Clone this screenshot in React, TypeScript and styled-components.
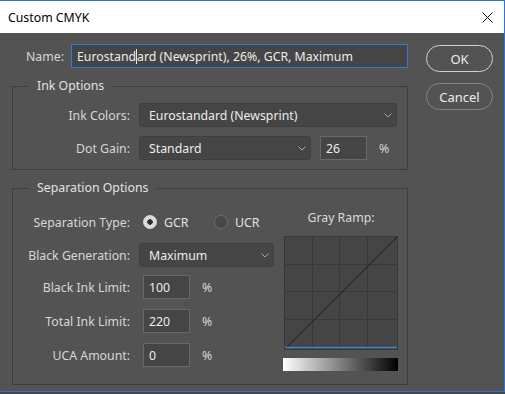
import React from 'react';
import styled, { createGlobalStyle } from 'styled-components';

const GlobalStyle = createGlobalStyle`
	html, body {
		margin: 0;
		padding: 0;
		background: #454545;
	}
	body {
		font-family: "Noto Sans", "Open Sans", sans-serif;
		font-size: 12.3px;
	}
`;

function Chevron() {
	return (
		<svg width="8" height="5" viewBox="0 0 8 5">
			<polyline points="0.5,0.5 4,4 7.5,0.5" fill="none" stroke="#a8a8a8" strokeWidth="1" />
		</svg>
	);
}

function CloseIcon() {
	return (
		<svg width="11" height="11" viewBox="0 0 11 11">
			<line x1="0.5" y1="0.5" x2="10.5" y2="10.5" stroke="#111" strokeWidth="1" />
			<line x1="10.5" y1="0.5" x2="0.5" y2="10.5" stroke="#111" strokeWidth="1" />
		</svg>
	);
}

function GrayRampChart() {
	const ticks = [28, 55, 83];
	return (
		<svg width="114" height="114" viewBox="0 0 114 114">
			<rect x="0.5" y="0.5" width="113" height="113" fill="#454545" stroke="#383838" />
			{ticks.map((t) => (
				<line key={'v' + t} x1={t + 0.5} y1="1" x2={t + 0.5} y2="113" stroke="#393939" />
			))}
			{ticks.map((t) => (
				<line key={'h' + t} x1="1" y1={t + 0.5} x2="113" y2={t + 0.5} stroke="#393939" />
			))}
			<line x1="1" y1="113" x2="113" y2="1" stroke="#1c1c1c" strokeWidth="1" />
			<line x1="1" y1="111.5" x2="113" y2="111.5" stroke="#3e82c9" strokeWidth="1.3" />
		</svg>
	);
}

type RowProps = { label: string; mt: number; children: React.ReactNode };
function FormRow({ label, mt, children }: RowProps) {
	return (
		<Row $mt={mt}>
			<Label $w={117}>{label}</Label>
			{children}
		</Row>
	);
}

export default function App() {
	return (
		<>
			<GlobalStyle />
			<Window>
				<TitleBar>
					<Title>Custom CMYK</Title>
					<CloseIcon />
				</TitleBar>
				<Body>
					<MainColumn>
						<Row $mt={0}>
							<Label $w={52} $gap={7}>Name:</Label>
							<NameField>
								Eurostand
								<Caret />
								ard (Newsprint), 26%, GCR, Maximum
							</NameField>
						</Row>

						<Group $mt={18} $pb={9}>
							<GroupTitle>Ink Options</GroupTitle>
							<FormRow label="Ink Colors:" mt={9}>
								<Select $w={258}>
									<span>Eurostandard (Newsprint)</span>
									<Chevron />
								</Select>
							</FormRow>
							<FormRow label="Dot Gain:" mt={9}>
								<Select $w={172}>
									<span>Standard</span>
									<Chevron />
								</Select>
								<NumField $ml={9}>26</NumField>
								<Percent>%</Percent>
							</FormRow>
						</Group>

						<Group $mt={18} $pb={13}>
							<GroupTitle>Separation Options</GroupTitle>
							<SplitRow>
								<div>
									<FormRow label="Separation Type:" mt={14}>
										<RadioOption $w={71}>
											<Radio $checked />
											<span>GCR</span>
										</RadioOption>
										<RadioOption $w={50}>
											<Radio $checked={false} />
											<span>UCR</span>
										</RadioOption>
									</FormRow>
									<FormRow label="Black Generation:" mt={9}>
										<Select $w={135}>
											<span>Maximum</span>
											<Chevron />
										</Select>
									</FormRow>
									<FormRow label="Black Ink Limit:" mt={8}>
										<NumField $ml={4}>100</NumField>
										<Percent>%</Percent>
									</FormRow>
									<FormRow label="Total Ink Limit:" mt={10}>
										<NumField $ml={4}>220</NumField>
										<Percent>%</Percent>
									</FormRow>
									<FormRow label="UCA Amount:" mt={10}>
										<NumField $ml={4}>0</NumField>
										<Percent>%</Percent>
									</FormRow>
								</div>
								<RampColumn>
									<RampLabel>Gray Ramp:</RampLabel>
									<ChartBox>
										<GrayRampChart />
									</ChartBox>
									<GradientBar />
								</RampColumn>
							</SplitRow>
						</Group>
					</MainColumn>

					<ButtonColumn>
						<DialogButton $primary>OK</DialogButton>
						<DialogButton>Cancel</DialogButton>
					</ButtonColumn>
				</Body>
			</Window>
		</>
	);
}

const Window = styled.div`
	width: 505px;
	height: 392px;
	box-sizing: border-box;
	border-top: 1px solid #2b73d4;
	border-right: 1px solid #2b73d4;
	border-bottom: 1px solid #2b73d4;
	display: flex;
	flex-direction: column;
	background: #535353;
`;

const TitleBar = styled.div`
	height: 32px;
	flex: none;
	background: #ffffff;
	display: flex;
	align-items: center;
	justify-content: space-between;
	padding: 0 11px 0 8px;
`;

const Title = styled.span`
	font-size: 12.3px;
	color: #000;
`;

const Body = styled.div`
	flex: 1;
	display: flex;
	padding: 11px 0 0 12px;
	color: #dadada;
`;

const MainColumn = styled.div`
	width: 396px;
	display: flex;
	flex-direction: column;
`;

const ButtonColumn = styled.div`
	margin-left: 18px;
	padding-top: 1px;
	display: flex;
	flex-direction: column;
	gap: 11px;
`;

const DialogButton = styled.div<{ $primary?: boolean }>`
	width: 67px;
	height: 27px;
	box-sizing: border-box;
	border-radius: 14px;
	border: ${(p) => (p.$primary ? '1.5px solid #d2d2d2' : '1px solid #858585')};
	display: flex;
	align-items: center;
	justify-content: center;
	font-size: 13px;
	color: #ececec;
`;

const Row = styled.div<{ $mt: number }>`
	display: flex;
	align-items: center;
	height: 24px;
	margin-top: ${(p) => p.$mt}px;
`;

const Label = styled.span<{ $w: number; $gap?: number }>`
	width: ${(p) => p.$w}px;
	margin-right: ${(p) => p.$gap ?? 9}px;
	flex: none;
	text-align: right;
	white-space: nowrap;
	color: #d6d6d6;
`;

const NameField = styled.div`
	width: 337px;
	height: 24px;
	box-sizing: border-box;
	border: 1px solid #2f7bd8;
	background: #454545;
	display: flex;
	align-items: center;
	padding-left: 5px;
	white-space: pre;
	color: #ececec;
`;

const Caret = styled.span`
	display: inline-block;
	width: 1px;
	height: 15px;
	background: #e8e8e8;
`;

const Group = styled.div<{ $mt: number; $pb: number }>`
	margin-top: ${(p) => p.$mt}px;
	padding-bottom: ${(p) => p.$pb}px;
	border: 1px solid #3d3d3d;
`;

const GroupTitle = styled.div`
	width: fit-content;
	margin: -9px 0 0 15px;
	padding: 0 9px;
	line-height: 16px;
	background: #535353;
	color: #e2e2e2;
`;

const Select = styled.div<{ $w: number }>`
	width: ${(p) => p.$w}px;
	height: 24px;
	box-sizing: border-box;
	border: 1px solid #3f3f3f;
	border-radius: 3px;
	background: #454545;
	display: flex;
	align-items: center;
	justify-content: space-between;
	padding: 0 4px 0 9px;
	color: #ececec;
`;

const NumField = styled.div<{ $ml: number }>`
	width: 47px;
	height: 24px;
	box-sizing: border-box;
	margin-left: ${(p) => p.$ml}px;
	border: 1px solid #686868;
	background: #454545;
	display: flex;
	align-items: center;
	padding-left: 5px;
	color: #ececec;
`;

const Percent = styled.span`
	margin-left: 12px;
	color: #d6d6d6;
`;

const RadioOption = styled.label<{ $w: number }>`
	width: ${(p) => p.$w}px;
	display: flex;
	align-items: center;
	gap: 7px;
	margin-left: 4px;
	color: #e2e2e2;
	& + & {
		margin-left: 0;
	}
`;

const Radio = styled.span<{ $checked: boolean }>`
	width: 14px;
	height: 14px;
	box-sizing: border-box;
	border-radius: 50%;
	border: 1px solid ${(p) => (p.$checked ? '#dcdcdc' : '#6e6e6e')};
	background: ${(p) => (p.$checked ? 'radial-gradient(circle, #2e2e2e 0 2.5px, #dcdcdc 3px)' : '#474747')};
`;

const SplitRow = styled.div`
	display: flex;
	justify-content: space-between;
`;

const RampColumn = styled.div`
	width: 114px;
	margin-right: 9px;
	display: flex;
	flex-direction: column;
	align-items: center;
`;

const RampLabel = styled.div`
	margin-top: 14px;
	line-height: 16px;
	color: #dadada;
`;

const ChartBox = styled.div`
	margin-top: 10px;
	height: 114px;
	line-height: 0;
`;

const GradientBar = styled.div`
	margin-top: 8px;
	width: 115px;
	margin-left: -1px;
	height: 13px;
	background: linear-gradient(to right, #ffffff, #000000);
`;
